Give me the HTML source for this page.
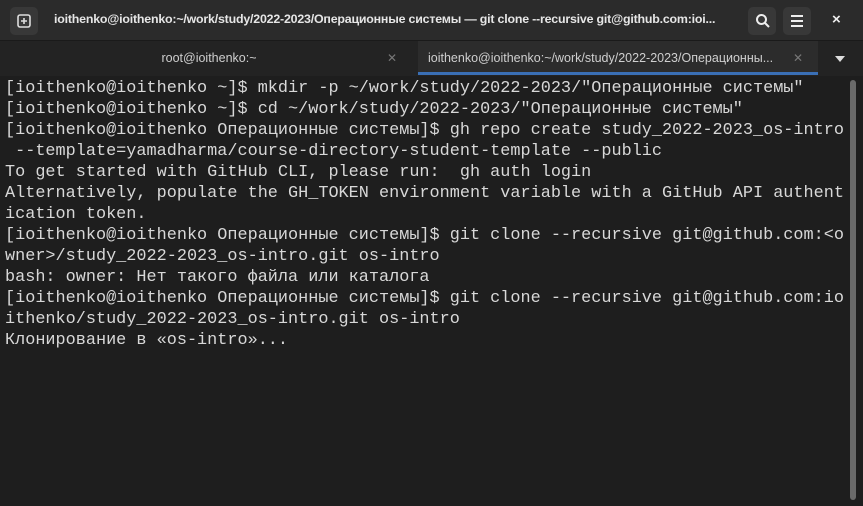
<!DOCTYPE html>
<html><head><meta charset="utf-8"><style>
html,body{margin:0;padding:0;width:863px;height:506px;overflow:hidden;background:#1e1e1e;font-family:"Liberation Sans","DejaVu Sans",sans-serif}
.title{position:absolute;left:0;top:0;width:863px;height:40px;background:#2b2b2b;}
.tbtn{position:absolute;top:7px;width:28px;height:28px;background:#383838;border-radius:5px}
.ttext{position:absolute;left:54px;top:12px;font-size:12.4px;font-weight:bold;color:#e6e6e6;white-space:nowrap;letter-spacing:-0.2px;width:682px;overflow:hidden}
.tabs{position:absolute;left:0;top:40px;width:863px;height:35px;background:#232323;border-top:1px solid #1a1a1a}
.tab{position:absolute;top:0;height:34px;font-size:12.5px;color:#cfcfcf;line-height:34px;text-align:center}
.x{position:absolute;top:0;font-size:12px;color:#777;line-height:34px}
.term{position:absolute;left:5px;top:78px;font-family:"Liberation Mono","DejaVu Sans Mono",monospace;font-size:16.85px;line-height:21px;color:#d8d8d8;white-space:pre}
.sb{position:absolute;left:850px;top:80px;width:6px;height:420px;background:#6a6a6a;border-radius:3px}
</style></head><body>
<div class="title">
 <div class="tbtn" style="left:10px"></div>
 <svg style="position:absolute;left:17px;top:14px" width="14" height="14" viewBox="0 0 14 14"><rect x="1" y="1" width="12" height="12" rx="2" fill="none" stroke="#ddd" stroke-width="1.6"/><path d="M7 4v6M4 7h6" stroke="#ddd" stroke-width="1.6"/></svg>
 <div class="ttext">ioithenko@ioithenko:~/work/study/2022-2023/Операционные системы — git clone --recursive git@github.com:ioi...</div>
 <div class="tbtn" style="left:748px"></div>
 <svg style="position:absolute;left:755px;top:13px" width="16" height="16" viewBox="0 0 16 16"><circle cx="6.5" cy="6.5" r="4.5" fill="none" stroke="#eee" stroke-width="2"/><path d="M10 10l4 4" stroke="#eee" stroke-width="2"/></svg>
 <div class="tbtn" style="left:783px"></div>
 <svg style="position:absolute;left:790px;top:14px" width="14" height="14" viewBox="0 0 14 14"><path d="M1 2h12M1 7h12M1 12h12" stroke="#eee" stroke-width="2"/></svg>
 <div style="position:absolute;left:832px;top:11px;color:#eee;font-size:15px;font-weight:bold">×</div>
</div>
<div class="tabs">
 <div class="tab" style="left:0;width:418px">root@ioithenko:~</div>
 <div class="x" style="left:387px">✕</div>
 <div class="tab" style="left:418px;width:400px;background:#2c2c2c;text-align:left;padding-left:10px;box-sizing:border-box">ioithenko@ioithenko:~/work/study/2022-2023/Операционны...</div>
 <div class="x" style="left:793px">✕</div>
 <div style="position:absolute;left:418px;top:31px;width:400px;height:3px;background:#3a6fb5"></div>
 <div style="position:absolute;left:835px;top:15px;width:0;height:0;border-left:5px solid transparent;border-right:5px solid transparent;border-top:6px solid #ddd"></div>
</div>
<div class="term">[ioithenko@ioithenko ~]$ mkdir -p ~/work/study/2022-2023/"Операционные системы"
[ioithenko@ioithenko ~]$ cd ~/work/study/2022-2023/"Операционные системы"
[ioithenko@ioithenko Операционные системы]$ gh repo create study_2022-2023_os-intro
 --template=yamadharma/course-directory-student-template --public
To get started with GitHub CLI, please run:  gh auth login
Alternatively, populate the GH_TOKEN environment variable with a GitHub API authent
ication token.
[ioithenko@ioithenko Операционные системы]$ git clone --recursive git@github.com:&lt;o
wner&gt;/study_2022-2023_os-intro.git os-intro
bash: owner: Нет такого файла или каталога
[ioithenko@ioithenko Операционные системы]$ git clone --recursive git@github.com:io
ithenko/study_2022-2023_os-intro.git os-intro
Клонирование в «os-intro»...</div>
<div class="sb"></div>
</body></html>
